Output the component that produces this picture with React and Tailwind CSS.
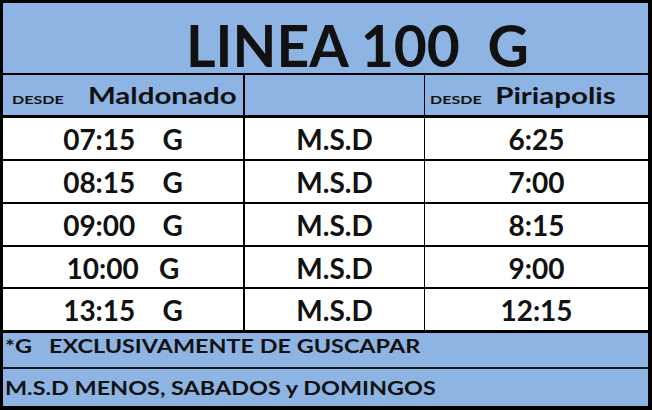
const rows = [
  { left: "07:15    G", mid: "M.S.D", right: "6:25", h: "h-[43px]" },
  { left: "08:15    G", mid: "M.S.D", right: "7:00", h: "h-[43px]" },
  { left: "09:00    G", mid: "M.S.D", right: "8:15", h: "h-[43px]" },
  { left: "10:00   G", mid: "M.S.D", right: "9:00", h: "h-[42px]" },
  { left: "13:15    G", mid: "M.S.D", right: "12:15", h: "h-[44px]" },
]

const App = () => {
  return (
    <div className="w-[652px] h-[410px] bg-white">
      <div
        className="w-[652px] h-[410px] flex flex-col border-black border-t-[3px] border-l-[3px] border-r-[4px] border-b-[4px] text-[#111] font-bold"
        style={{ fontFamily: "Lato, 'Open Sans', sans-serif" }}
      >
        {/* title */}
        <div className="h-[72px] shrink-0 bg-[#8db4e2] border-b-2 border-black flex items-center justify-center pl-[64px] pt-[14px]">
          <span className="text-[57px] leading-none whitespace-pre">LINEA 100  G</span>
        </div>

        {/* header */}
        <div className="h-[43px] shrink-0 grid grid-cols-[242px_180px_1fr] bg-[#8db4e2] border-b-[3px] border-black">
          <div className="border-r-2 border-black flex items-center pl-[9px] pt-[2px]">
            <span className="inline-flex items-baseline scale-x-[1.34] origin-left leading-none">
              <span className="text-[12px]">DESDE</span>
              <span className="text-[22px] ml-[18px]">Maldonado</span>
            </span>
          </div>
          <div className="border-r border-black"></div>
          <div className="flex items-center pl-[5px] pt-[2px]">
            <span className="inline-flex items-baseline scale-x-[1.34] origin-left leading-none">
              <span className="text-[12px]">DESDE</span>
              <span className="text-[22px] ml-[10px]">Piriapolis</span>
            </span>
          </div>
        </div>

        {/* horarios */}
        {rows.map((r, i) => (
          <div
            key={i}
            className={`${r.h} shrink-0 grid grid-cols-[242px_180px_1fr] bg-white border-black ${i === rows.length - 1 ? "border-b-[3px]" : "border-b-2"}`}
          >
            <div className="border-r-2 border-black flex items-center justify-center text-[28px] whitespace-pre">{r.left}</div>
            <div className="border-r border-black flex items-center justify-center text-[28px]">{r.mid}</div>
            <div className="flex items-center justify-center text-[28px]">{r.right}</div>
          </div>
        ))}

        {/* notas */}
        <div className="h-[36px] shrink-0 bg-[#8db4e2] border-b-2 border-[#1a1a1a] flex items-center pl-[2px] pb-[8px]">
          <span className="inline-block text-[18px] leading-none whitespace-pre scale-x-[1.3] origin-left">*G   EXCLUSIVAMENTE DE GUSCAPAR</span>
        </div>
        <div className="flex-1 bg-[#8db4e2] flex items-center pl-[2px]">
          <span className="inline-block text-[18px] leading-none scale-x-[1.3] origin-left">M.S.D MENOS, SABADOS y DOMINGOS</span>
        </div>
      </div>
    </div>
  )
}

export default App
